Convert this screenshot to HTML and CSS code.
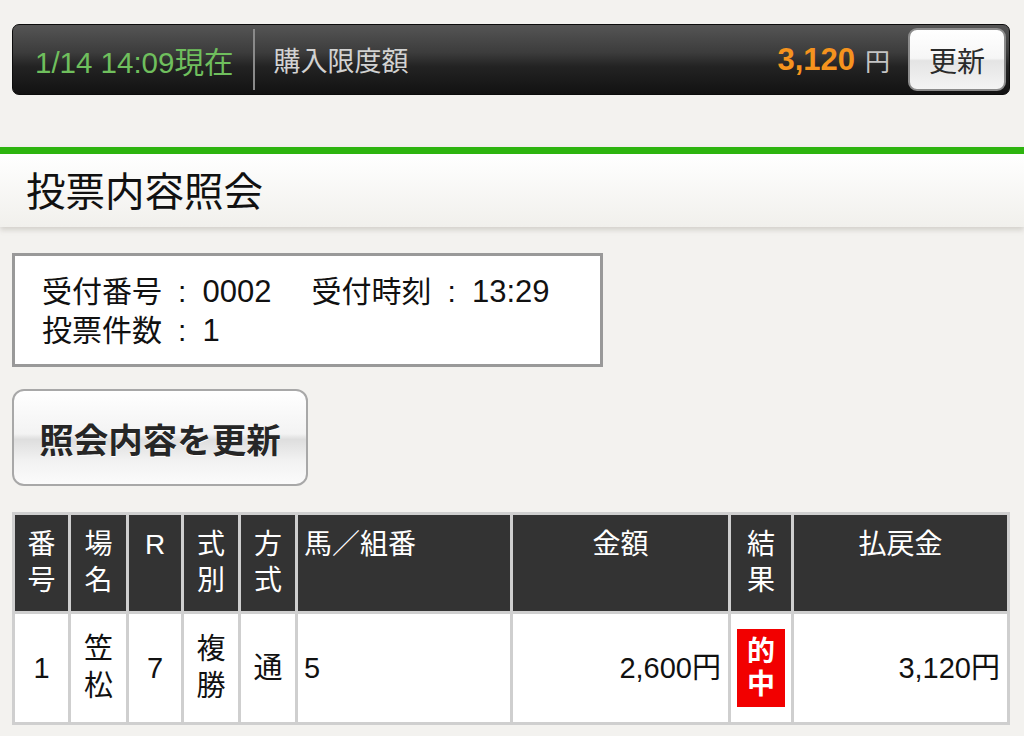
FILE: index.html
```html
<!DOCTYPE html>
<html lang="ja">
<head>
    <meta charset="UTF-8">
    <meta name="viewport" content="width=device-width, initial-scale=1.0">
    <title>投票内容照会</title>
    <link rel="stylesheet" href="styles.css">
</head>
<body>

    <!-- Status bar -->
    <div class="status-bar">
        <span class="status-time">1/14 14:09現在</span>
        <span class="status-divider"></span>
        <span class="status-label">購入限度額</span>
        <span class="status-amount">3,120</span>
        <span class="status-yen">円</span>
        <button class="status-btn">更新</button>
    </div>

    <h2 class="page-title">投票内容照会</h2>

    <div class="receipt-box">
        受付番号<span class="colon">:</span><span class="num">0002</span><span class="gap"></span>受付時刻<span class="colon">:</span><span class="num">13:29</span><br>
        投票件数<span class="colon">:</span><span class="num">1</span>
    </div>

    <button class="refresh-btn">照会内容を更新</button>

    <table class="bet-table">
        <colgroup>
            <col class="c-no">
            <col class="c-place">
            <col class="c-race">
            <col class="c-type">
            <col class="c-method">
            <col class="c-horse">
            <col class="c-amount">
            <col class="c-result">
            <col>
        </colgroup>
        <thead>
            <tr>
                <th>番<br>号</th>
                <th>場<br>名</th>
                <th>R</th>
                <th>式<br>別</th>
                <th>方<br>式</th>
                <th class="left">馬／組番</th>
                <th>金額</th>
                <th>結<br>果</th>
                <th>払戻金</th>
            </tr>
        </thead>
        <tbody>
            <tr>
                <td>1</td>
                <td>笠<br>松</td>
                <td>7</td>
                <td>複<br>勝</td>
                <td>通</td>
                <td class="left">5</td>
                <td class="right">2,600円</td>
                <td><span class="hit">的<br>中</span></td>
                <td class="right">3,120円</td>
            </tr>
        </tbody>
    </table>

</body>
</html>
```

FILE: styles.css
```css
body {
    font-family: "Liberation Sans", "Noto Sans CJK JP", sans-serif;
    background-color: #f3f2ef;
    color: #111;
    margin: 0;
    padding: 24px 0 0;
}

/* Status bar */
.status-bar {
    display: flex;
    align-items: center;
    height: 69px;
    margin: 0 14px 0 12px;
    padding: 0 3px 0 22px;
    border: 1px solid #0c0c0c;
    border-radius: 7px;
    background: linear-gradient(#555555, #3c3c3c 40%, #232323 60%, #121212);
}

.status-time {
    color: #6fbf5d;
    font-size: 29.5px;
}

.status-divider {
    width: 2px;
    height: 61px;
    margin: 0 18px 0 20px;
    background-color: #8a8a8a;
}

.status-label {
    color: #d2d2d2;
    font-size: 27px;
    flex: 1;
}

.status-amount {
    color: #f5931e;
    font-size: 31px;
    font-weight: bold;
}

.status-yen {
    color: #c4c4c4;
    font-size: 25px;
    margin: 0 18px 0 10px;
}

.status-btn {
    width: 98px;
    height: 63px;
    border: 2px solid #8c8c8c;
    border-radius: 9px;
    background: linear-gradient(#ffffff, #f6f6f6 48%, #e4e4e4 52%, #f4f4f4);
    color: #2a2a2a;
    font-family: inherit;
    font-size: 28px;
    padding: 0;
}

/* Page title */
.page-title {
    margin: 52px 0 0;
    padding: 18px 26px 14px;
    border-top: 7px solid #2db40f;
    background: linear-gradient(#ffffff, #f1f0ec);
    box-shadow: 0 3px 5px rgba(120, 110, 100, 0.25);
    font-size: 39.5px;
    font-weight: normal;
    line-height: 41px;
    color: #111;
}

/* Receipt info */
.receipt-box {
    box-sizing: border-box;
    width: 591px;
    margin: 26px 0 0 12px;
    padding: 16px 27px 14px;
    border: 3px solid #999999;
    background-color: #ffffff;
    font-size: 30px;
    line-height: 39px;
}

.receipt-box .num {
    font-size: 31px;
}

.receipt-box .colon {
    display: inline-block;
    width: 1.35em;
    text-align: center;
}

.receipt-box .gap {
    display: inline-block;
    width: 40px;
}

.refresh-btn {
    display: block;
    width: 296px;
    height: 97px;
    margin: 22px 0 0 12px;
    border: 2px solid #a8a8a8;
    border-radius: 12px;
    background: linear-gradient(#ffffff, #f3f3f3 46%, #dedede 52%, #f2f2f2 75%, #fbfbfb);
    color: #262626;
    font-family: inherit;
    font-size: 34.5px;
    font-weight: bold;
    text-shadow: 0 1px 0 #ffffff;
    padding: 0;
}

/* Bet table */
.bet-table {
    width: 998px;
    margin: 26px 0 0 12px;
    table-layout: fixed;
    border-collapse: separate;
    border-spacing: 3px;
    background-color: #cfcfcf;
}

.c-no { width: 53px; }
.c-place { width: 55px; }
.c-race { width: 52px; }
.c-type { width: 54px; }
.c-method { width: 54px; }
.c-horse { width: 212px; }
.c-amount { width: 215px; }
.c-result { width: 60px; }

th, td {
    padding: 12px 6px;
    text-align: center;
}

th {
    background-color: #333333;
    color: #ffffff;
    font-size: 28px;
    font-weight: normal;
    line-height: 36px;
    vertical-align: top;
}

td {
    background-color: #ffffff;
    font-size: 29px;
    line-height: 37px;
    vertical-align: middle;
    padding-top: 15px;
    padding-bottom: 15px;
}

th.left, td.left {
    text-align: left;
}

td.right {
    text-align: right;
    padding-right: 7px;
}

.hit {
    display: inline-block;
    padding: 6px 10px;
    background-color: #f20000;
    color: #ffffff;
    font-size: 28px;
    font-weight: bold;
    line-height: 33px;
}
```
